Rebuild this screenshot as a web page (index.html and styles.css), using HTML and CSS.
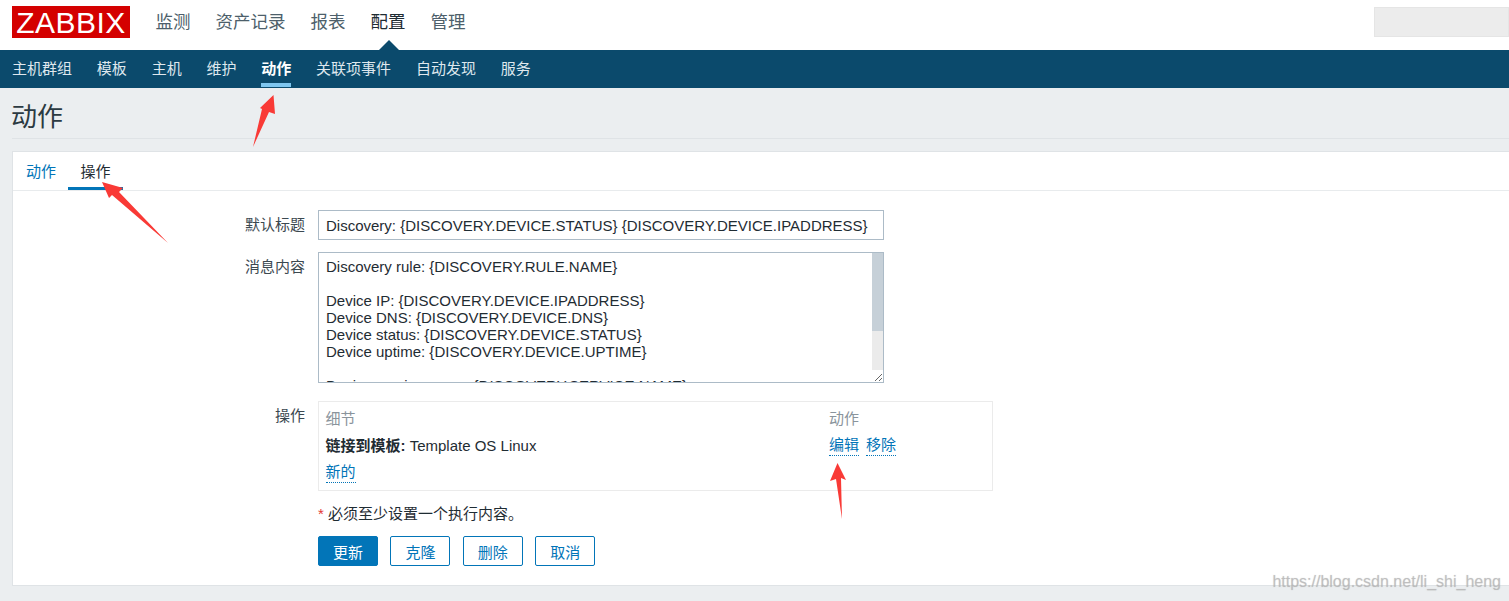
FILE: index.html
```html
<!DOCTYPE html>
<html lang="en">
<head>
    <meta charset="UTF-8">
    <meta name="viewport" content="width=device-width, initial-scale=1.0">
    <title>动作</title>
    <link rel="stylesheet" href="styles.css">
</head>
<body>
<header class="top-bar">
    <div class="logo">ZABBIX</div>
    <nav class="main-nav">
        <a href="#">监测</a>
        <a href="#">资产记录</a>
        <a href="#">报表</a>
        <a href="#" class="active">配置</a>
        <a href="#">管理</a>
    </nav>
    <div class="search-box"></div>
</header>
<nav class="sub-nav">
    <a href="#">主机群组</a>
    <a href="#">模板</a>
    <a href="#">主机</a>
    <a href="#">维护</a>
    <a href="#" class="active">动作</a>
    <a href="#">关联项事件</a>
    <a href="#">自动发现</a>
    <a href="#">服务</a>
</nav>
<main class="content">
    <h1 class="page-title">动作</h1>
    <section class="panel">
        <div class="tabs">
            <a href="#" class="tab">动作</a>
            <a href="#" class="tab active">操作</a>
        </div>
        <form class="form-grid">
            <label class="form-label">默认标题</label>
            <input class="text-input" type="text" value="Discovery: {DISCOVERY.DEVICE.STATUS} {DISCOVERY.DEVICE.IPADDRESS}">

            <label class="form-label">消息内容</label>
            <div class="area-wrap">
                <textarea class="text-area">Discovery rule: {DISCOVERY.RULE.NAME}

Device IP: {DISCOVERY.DEVICE.IPADDRESS}
Device DNS: {DISCOVERY.DEVICE.DNS}
Device status: {DISCOVERY.DEVICE.STATUS}
Device uptime: {DISCOVERY.DEVICE.UPTIME}

Device service name: {DISCOVERY.SERVICE.NAME}
Device service port: {DISCOVERY.SERVICE.PORT}
Device service status: {DISCOVERY.SERVICE.STATUS}
Device service uptime: {DISCOVERY.SERVICE.UPTIME}</textarea>
                <div class="area-scroll"><div class="area-thumb"></div></div>
            </div>

            <label class="form-label">操作</label>
            <div class="ops-box">
                <div class="ops-row ops-head">
                    <span class="ops-detail">细节</span>
                    <span>动作</span>
                </div>
                <div class="ops-row">
                    <span class="ops-detail"><b>链接到模板:</b> Template OS Linux</span>
                    <span class="ops-links"><a href="#" class="dotted">编辑</a><a href="#" class="dotted">移除</a></span>
                </div>
                <div class="ops-row">
                    <a href="#" class="dotted">新的</a>
                </div>
            </div>

            <div class="form-note"><span class="star">*</span> 必须至少设置一个执行内容。</div>

            <div class="form-buttons">
                <button type="button" class="btn primary">更新</button>
                <button type="button" class="btn">克隆</button>
                <button type="button" class="btn">删除</button>
                <button type="button" class="btn">取消</button>
            </div>
        </form>
    </section>
</main>

<!-- red arrows drawn over the screenshot -->
<svg class="arrows" width="1509" height="601" viewBox="0 0 1509 601">
    <path d="M273.5 95 L275 114 L269 112 L253 147 L262 109 L260 108 Z"/>
    <path d="M102 182 L123 188 L119 192 L168 243 L112 195 L109 198 Z"/>
    <path d="M837.5 463 L846 480 L841 478 L842 519 L836 479 L830 481 Z"/>
</svg>
<div class="watermark">https://blog.csdn.net/li_shi_heng</div>
</body>
</html>
```

FILE: styles.css
```css
html, body {
    margin: 0;
    height: 601px;
    overflow: hidden;
}

body {
    background-color: #ebeef0;
    font-family: "Liberation Sans", "Noto Sans CJK SC", sans-serif;
    font-size: 15px;
    color: #1f2c33;
}

a {
    text-decoration: none;
    color: #0275b8;
}

/* Top bar */
.top-bar {
    display: flex;
    align-items: flex-start;
    height: 50px;
    background-color: #fff;
    padding-left: 12px;
}

.logo {
    width: 118px;
    height: 32px;
    margin-top: 6px;
    background-color: #d40000;
    color: #fff;
    font-size: 30px;
    line-height: 33px;
    text-align: center;
    letter-spacing: 0.5px;
}

.main-nav {
    display: flex;
    gap: 25px;
    margin-left: 25.5px;
    padding-top: 10px;
}

.main-nav a {
    position: relative;
    font-size: 17.5px;
    line-height: 25px;
    color: #4d5f6b;
}

.main-nav a.active {
    color: #1f2c33;
}

/* little notch above the active section */
.main-nav a.active::after {
    content: "";
    position: absolute;
    left: 8px;
    top: 30px;
    border-left: 10px solid transparent;
    border-right: 10px solid transparent;
    border-bottom: 10px solid #0b4a6c;
}

.search-box {
    width: 133px;
    height: 28px;
    margin: 7px 0 0 auto;
    background-color: #ececec;
    border: 1px solid #e5e5e5;
}

/* Second level nav */
.sub-nav {
    display: flex;
    gap: 24.8px;
    height: 38px;
    padding-left: 12px;
    background-color: #0b4a6c;
}

.sub-nav a {
    font-size: 15px;
    line-height: 37px;
    color: #dfe8ee;
}

.sub-nav a.active {
    height: 37px;
    color: #fff;
    font-weight: bold;
    border-bottom: 4px solid #7ec6ef;
    box-sizing: border-box;
}

/* Page */
.content {
    padding-left: 12px;
}

.page-title {
    height: 50px;
    margin: 0 0 12px;
    font-size: 26px;
    font-weight: normal;
    line-height: 58px;
    text-indent: -1px;
    color: #2b3a42;
    border-bottom: 1px solid #dfe3e6;
}

.panel {
    height: 433px;
    background-color: #fff;
    border: 1px solid #dfe3e6;
    border-right: none;
}

/* Tabs */
.tabs {
    display: flex;
    height: 38px;
    border-bottom: 1px solid #e8ebed;
}

.tab {
    padding: 0 12px 0 13px;
    line-height: 40px;
    height: 38px;
    box-sizing: border-box;
}

.tab.active {
    padding: 0 12.5px;
    color: #1f2c33;
    border-bottom: 3px solid #0275b8;
}

/* Form */
.form-grid {
    display: grid;
    grid-template-columns: 292px 675px;
    column-gap: 13px;
    padding-top: 19px;
    align-items: start;
}

.form-label {
    text-align: right;
    line-height: 29px;
    color: #3b4850;
}

.text-input,
.text-area {
    display: block;
    width: 566px;
    box-sizing: border-box;
    padding: 0 7px;
    font-family: inherit;
    font-size: inherit;
    color: #1f2c33;
    border: 1px solid #acbbc7;
    background-color: #fff;
    outline: none;
}

.text-input {
    height: 30px;
    margin-bottom: 12px;
}

.area-wrap {
    position: relative;
    width: 566px;
    margin-bottom: 18px;
}

.text-area {
    height: 131px;
    padding-top: 5px;
    line-height: 17px;
    overflow: hidden;
    border-radius: 0;
}

/* scrollbar track and thumb, the grip corner stays uncovered */
.area-scroll {
    position: absolute;
    top: 1px;
    right: 1px;
    bottom: 13px;
    width: 11px;
    background-color: #ebebeb;
}

.area-thumb {
    height: 78px;
    background-color: #c6d0d8;
}

.ops-box {
    height: 90px;
    box-sizing: border-box;
    padding: 2px 7px 0 6.5px;
    border: 1px solid #ebebeb;
}

.ops-row {
    display: flex;
    height: 27px;
    align-items: center;
}

.ops-head {
    color: #8a949c;
}

.ops-detail {
    width: 503.5px;
}

.ops-links {
    display: flex;
    gap: 7px;
}

.dotted {
    border-bottom: 1px dotted #0275b8;
    line-height: 20px;
    margin-bottom: -1px;
}

.form-note {
    grid-column: 2;
    margin-top: 14px;
    line-height: 17px;
}

.star {
    color: #e33734;
}

.form-buttons {
    grid-column: 2;
    display: flex;
    gap: 12.4px;
    margin-top: 14px;
}

.btn {
    width: 60px;
    height: 30px;
    padding: 0;
    font-family: inherit;
    font-size: inherit;
    color: #0275b8;
    background-color: #fff;
    border: 1px solid #0275b8;
    border-radius: 2px;
}

.btn.primary {
    color: #fff;
    background-color: #0275b8;
}

/* Annotations on top of the page */
.arrows {
    position: absolute;
    left: 0;
    top: 0;
    pointer-events: none;
}

.arrows path {
    fill: #f93a36;
}

.watermark {
    position: absolute;
    right: 8px;
    top: 573px;
    font-size: 16px;
    color: rgba(175, 175, 175, 0.6);
    text-shadow: 0 0 1px rgba(175, 175, 175, 0.6);
}
```
